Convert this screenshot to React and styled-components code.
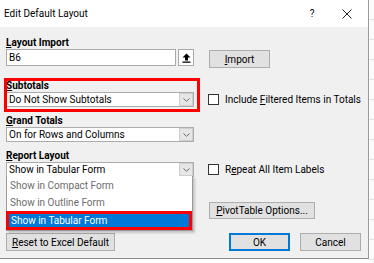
import React from "react";
import styled, { createGlobalStyle } from "styled-components";

const GlobalStyle = createGlobalStyle`
  html, body {
    margin: 0;
    padding: 0;
  }
  body {
    width: 374px;
    height: 263px;
    overflow: hidden;
    background: #fff;
    font-family: Roboto, "Liberation Sans", Arial, sans-serif;
  }
`;

const Page = styled.div`
  display: flex;
  width: 374px;
  height: 263px;
  background: #fff;
`;

const Dialog = styled.div`
  width: 368px;
  height: 258px;
  display: flex;
  flex-direction: column;
  background: #f0f0f0;
  border-right: 1px solid #9b9b9b;
  border-bottom: 1px solid #8c8c8c;
  font-size: 10px;
  color: #000;
`;

const Sheet = styled.div`
  flex: 1;
  background: repeating-linear-gradient(
    to bottom,
    #fbfbfb 0,
    #fbfbfb 19px,
    #e2e2e2 19px,
    #e2e2e2 20px
  );
`;

const TitleBar = styled.div`
  height: 27px;
  flex-shrink: 0;
  background: #fff;
  display: flex;
  align-items: center;
  padding: 0 6px 0 4px;
`;

const Title = styled.span`
  flex: 1;
  font-size: 10px;
`;

const TitleIcon = styled.span`
  width: 30px;
  height: 27px;
  margin-left: 5px;
  display: flex;
  align-items: center;
  justify-content: center;
  font-size: 10px;
`;

const Body = styled.div`
  display: flex;
  flex-direction: column;
  padding-left: 6px;
`;

const Section = styled.div`
  display: flex;
  align-items: ${(p) => (p.$top ? "flex-start" : "flex-end")};
  margin-top: ${(p) => p.$mt || 0}px;
`;

const Field = styled.div`
  width: 188px;
  display: flex;
  flex-direction: column;
  position: relative;

  &::after {
    content: "";
    display: ${(p) => (p.$marked ? "block" : "none")};
    position: absolute;
    top: -1px;
    left: -2px;
    right: -6px;
    bottom: -5px;
    border: 3px solid #ff0000;
    pointer-events: none;
  }
`;

const Label = styled.div`
  font-weight: 700;
  line-height: 13px;
  height: 13px;
`;

const Side = styled.div`
  margin-left: 14px;
  height: ${(p) => p.$h || 15}px;
  display: flex;
  align-items: center;
`;

const InputRow = styled.div`
  display: flex;
  height: 17px;
  gap: 2px;
`;

const TextInput = styled.div`
  flex: 1;
  box-sizing: border-box;
  border: 1px solid #a9a9a9;
  background: #fff;
  padding-left: 2px;
  line-height: 15px;
`;

const PickButton = styled.div`
  width: 16px;
  box-sizing: border-box;
  border: 1px solid #a9a9a9;
  background: #fff;
  display: flex;
  align-items: center;
  justify-content: center;
`;

const Combo = styled.div`
  height: 15px;
  box-sizing: border-box;
  border: 1px solid #acacac;
  background: #fff;
  display: flex;
  position: relative;
`;

const ComboText = styled.span`
  flex: 1;
  padding-left: 2px;
  line-height: 13px;
  white-space: nowrap;
`;

const ComboArrow = styled.span`
  width: 14px;
  box-sizing: border-box;
  border: 1px solid #cfcfcf;
  background: #e6e6e6;
  display: flex;
  align-items: center;
  justify-content: center;
`;

const DropList = styled.div`
  position: absolute;
  top: 100%;
  left: -1px;
  right: 0;
  padding-top: 1px;
  background: #fff;
  border: 1px solid #9a9a9a;
  border-top: none;
  box-shadow: 2px 2px 2px rgba(0, 0, 0, 0.18);
  z-index: 2;
`;

const DropItem = styled.div`
  box-sizing: border-box;
  height: ${(p) => (p.$active ? 19 : 17)}px;
  line-height: ${(p) => (p.$active ? 13 : 17)}px;
  padding-left: ${(p) => (p.$active ? 2 : 3)}px;
  margin-left: ${(p) => (p.$active ? -1 : 0)}px;
  color: ${(p) => (p.$active ? "#fff" : "#6d6d6d")};
  background: ${(p) => (p.$active ? "#0078d7" : "transparent")};
  border: ${(p) => (p.$active ? "3px solid #ff0000" : "none")};
  white-space: nowrap;
`;

const Check = styled.span`
  width: 11px;
  height: 11px;
  box-sizing: border-box;
  border: 1px solid #333;
  background: #fff;
  flex-shrink: 0;
`;

const CheckText = styled.span`
  margin-left: 6px;
  white-space: nowrap;
`;

const Button = styled.div`
  width: ${(p) => p.$w}px;
  height: ${(p) => p.$h || 18}px;
  margin-top: ${(p) => p.$mt || 0}px;
  margin-left: ${(p) => p.$ml || 0}px;
  box-sizing: border-box;
  border: 1px solid ${(p) => (p.$primary ? "#0078d7" : "#adadad")};
  box-shadow: ${(p) => (p.$primary ? "inset 0 0 0 1px #0078d7" : "none")};
  background: #e1e1e1;
  display: flex;
  align-items: center;
  justify-content: center;
  white-space: nowrap;
`;

const Footer = styled.div`
  display: flex;
  align-items: center;
  margin-top: 14px;
  padding-right: 7px;
`;

const Spacer = styled.div`
  flex: 1;
`;

const Chevron = () => (
  <svg width="7" height="4" viewBox="0 0 7 4">
    <path d="M0.5 0.5 L3.5 3.3 L6.5 0.5" fill="none" stroke="#6a6a6a" strokeWidth="1" />
  </svg>
);

const UploadIcon = () => (
  <svg width="9" height="10" viewBox="0 0 9 10">
    <path d="M4.5 0.5 L8.5 4.6 L6 4.6 L6 7.5 L3 7.5 L3 4.6 L0.5 4.6 Z" fill="#000" />
    <rect x="0.5" y="8.5" width="8" height="1.3" fill="#000" />
  </svg>
);

const CloseIcon = () => (
  <svg width="10" height="10" viewBox="0 0 10 10">
    <path d="M0.5 0.5 L9.5 9.5 M9.5 0.5 L0.5 9.5" stroke="#222" strokeWidth="1" />
  </svg>
);

const ComboBox = ({ value, children }) => (
  <Combo>
    <ComboText>{value}</ComboText>
    <ComboArrow>
      <Chevron />
    </ComboArrow>
    {children}
  </Combo>
);

const layoutOptions = [
  "Show in Compact Form",
  "Show in Outline Form",
  "Show in Tabular Form",
];

export default function App() {
  return (
    <>
      <GlobalStyle />
      <Page>
        <Dialog>
          <TitleBar>
            <Title>Edit Default Layout</Title>
            <TitleIcon>?</TitleIcon>
            <TitleIcon>
              <CloseIcon />
            </TitleIcon>
          </TitleBar>
          <Body>
            <Section $top $mt={9}>
              <Field>
                <Label>
                  <u>L</u>ayout Import
                </Label>
                <InputRow>
                  <TextInput>B6</TextInput>
                  <PickButton>
                    <UploadIcon />
                  </PickButton>
                </InputRow>
              </Field>
              <Button $w={61} $mt={14} $ml={15}>
                <u>I</u>mport
              </Button>
            </Section>

            <Section $mt={11}>
              <Field $marked>
                <Label>
                  <u>S</u>ubtotals
                </Label>
                <ComboBox value="Do Not Show Subtotals" />
              </Field>
              <Side>
                <Check />
                <CheckText>
                  Include <u>F</u>iltered Items in Totals
                </CheckText>
              </Side>
            </Section>

            <Section $mt={7}>
              <Field>
                <Label>
                  <u>G</u>rand Totals
                </Label>
                <ComboBox value="On for Rows and Columns" />
              </Field>
            </Section>

            <Section $mt={7}>
              <Field>
                <Label>
                  <u>R</u>eport Layout
                </Label>
                <ComboBox value="Show in Tabular Form">
                  <DropList>
                    {layoutOptions.map((opt, i) => (
                      <DropItem key={opt} $active={i === 2}>
                        {opt}
                      </DropItem>
                    ))}
                  </DropList>
                </ComboBox>
              </Field>
              <Side>
                <Check />
                <CheckText>
                  R<u>e</u>peat All Item Labels
                </CheckText>
              </Side>
            </Section>

            <Section $mt={25}>
              <Field />
              <Button $w={106} $h={17} $ml={15}>
                <u>P</u>ivotTable Options...
              </Button>
            </Section>

            <Footer>
              <Button $w={109}>
                <u>R</u>eset to Excel Default
              </Button>
              <Spacer />
              <Button $w={61} $primary>
                OK
              </Button>
              <Button $w={61} $ml={10}>
                Cancel
              </Button>
            </Footer>
          </Body>
        </Dialog>
        <Sheet />
      </Page>
    </>
  );
}
